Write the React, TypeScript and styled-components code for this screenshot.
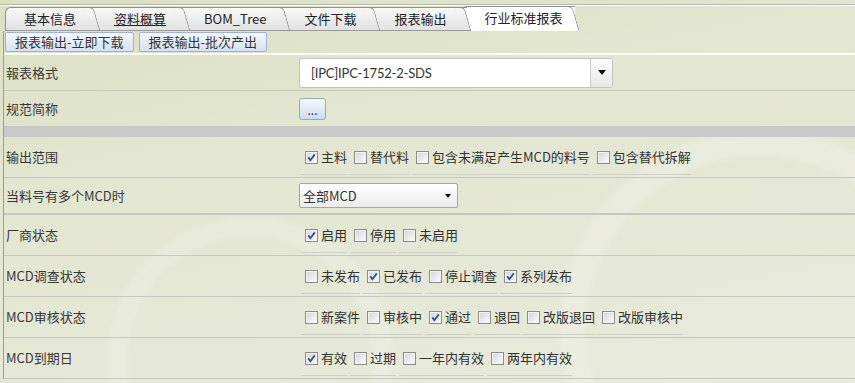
import React from "react";
import styled, { createGlobalStyle } from "styled-components";

const Global = createGlobalStyle`
  html, body { margin: 0; padding: 0; }
  body {
    width: 855px;
    height: 383px;
    overflow: hidden;
    font-family: "Noto Sans CJK SC", "Microsoft YaHei", sans-serif;
    font-size: 13px;
    color: #333;
    background:
      radial-gradient(circle at 760px 330px, transparent 170px, rgba(255,255,255,0.2) 178px, rgba(255,255,255,0.2) 196px, transparent 204px),
      radial-gradient(circle at 250px 360px, transparent 120px, rgba(255,255,255,0.16) 126px, rgba(255,255,255,0.16) 140px, transparent 146px),
      linear-gradient(168deg, #dbe0c3 0%, #e3e6d1 35%, #e8eadc 100%);
  }
`;

const Page = styled.div`
  width: 855px;
  height: 383px;
`;

const TopRule = styled.div`
  height: 4px;
  border-bottom: 1px solid #b6b8ae;
  box-shadow: 0 1px 0 rgba(255, 255, 255, 0.85);
`;

const TabBar = styled.div`
  display: flex;
  align-items: flex-end;
  height: 25px;
  padding: 1px 0 0 5px;
`;

const Tab = styled.div<{ $active?: boolean; $first?: boolean; $z: number; $link?: boolean }>`
  position: relative;
  z-index: ${(p) => p.$z};
  box-sizing: border-box;
  display: flex;
  align-items: center;
  height: ${(p) => (p.$active ? 25 : 24)}px;
  padding: 0 ${(p) => (p.$active ? 12 : 20)}px 1px ${(p) => (p.$first ? 18 : 24)}px;
  margin-left: ${(p) => (p.$first ? 0 : -6)}px;
  border-top: 1px solid #8f8f8f;
  border-left: ${(p) => (p.$first ? "1px solid #8f8f8f" : "none")};
  border-bottom: 1px solid ${(p) => (p.$active ? "#ffffff" : "#9a9a9a")};
  border-top-left-radius: 6px;
  background: ${(p) => (p.$active ? "#ffffff" : "linear-gradient(#f8f8f8, #e2e2e2)")};
  color: #222;
  font-size: 13px;
  line-height: 18px;
  white-space: nowrap;
  text-decoration: ${(p) => (p.$link ? "underline" : "none")};

  &::after {
    content: "";
    position: absolute;
    top: -1px;
    bottom: -1px;
    right: -1px;
    width: 10px;
    box-sizing: border-box;
    background: inherit;
    border-top: 1px solid #8f8f8f;
    border-right: 1px solid #8f8f8f;
    border-bottom: 1px solid ${(p) => (p.$active ? "#ffffff" : "#9a9a9a")};
    border-top-right-radius: 5px;
    transform: skewX(16deg);
  }
`;

const TabLabel = styled.span`
  position: relative;
  z-index: 1;
`;

const Panel = styled.div`
  margin-left: 3px;
  border-left: 1px solid #9c9c9c;
`;

const SubBar = styled.div`
  display: flex;
  gap: 5px;
  height: 21px;
  padding: 1px 0 0 1px;
  border-bottom: 2px solid rgba(255, 255, 255, 0.9);
`;

const SubButton = styled.div`
  box-sizing: border-box;
  height: 20px;
  padding: 0 9px;
  border: 1px solid #9db2d2;
  border-radius: 2px;
  background: linear-gradient(#f5f8fd, #d5e1f3);
  font-size: 13px;
  line-height: 18px;
  color: #333;
  white-space: nowrap;
`;

const Row = styled.div<{ $h: number; $border?: number }>`
  display: grid;
  grid-template-columns: 295px 1fr;
  align-items: center;
  height: ${(p) => p.$h}px;
  border-bottom: ${(p) => p.$border ?? 1}px solid #c6c7c2;
`;

const Label = styled.div`
  padding-left: 2px;
  font-size: 13px;
  line-height: 18px;
  color: #383838;
  white-space: nowrap;
`;

const Band = styled.div`
  height: 11px;
  background: #c9c9c9;
`;

const FormatSelect = styled.div`
  box-sizing: border-box;
  display: flex;
  width: 314px;
  height: 30px;
  border: 1px solid #c3c3c3;
  border-radius: 3px;
  background: #fff;
  overflow: hidden;
`;

const SelectText = styled.div<{ $pad: number; $latin?: boolean }>`
  flex: 1;
  display: flex;
  align-items: center;
  padding-left: ${(p) => p.$pad}px;
  font-family: ${(p) => (p.$latin ? `"Lato", "Noto Sans CJK SC", sans-serif` : "inherit")};
  letter-spacing: ${(p) => (p.$latin ? "-0.2px" : "normal")};
  font-size: 13px;
  color: #333;
  white-space: nowrap;
`;

const ArrowBox = styled.div`
  display: flex;
  align-items: center;
  justify-content: center;
  width: 21px;
  border-left: 1px solid #cacaca;
  background: linear-gradient(#fdfdfd, #e8e8e8);
`;

const Triangle = styled.span<{ $w: number; $h: number }>`
  width: 0;
  height: 0;
  border-left: ${(p) => p.$w}px solid transparent;
  border-right: ${(p) => p.$w}px solid transparent;
  border-top: ${(p) => p.$h}px solid #111;
`;

const DotsButton = styled.div`
  box-sizing: border-box;
  display: flex;
  align-items: flex-end;
  justify-content: center;
  width: 27px;
  height: 22px;
  padding-bottom: 3px;
  border: 1px solid #94a9c9;
  border-radius: 3px;
  background: linear-gradient(#f6f9fd, #cddaee);
  font-size: 12px;
  line-height: 12px;
  color: #333;
`;

const SmallSelect = styled.div`
  box-sizing: border-box;
  display: flex;
  align-items: center;
  width: 159px;
  height: 25px;
  padding-right: 6px;
  border: 1px solid #a6a6a6;
  border-radius: 2px;
  background: linear-gradient(#ffffff, #ebebeb);
`;

const CheckGroup = styled.div`
  align-self: stretch;
  display: flex;
  align-items: flex-start;
  gap: 3px;
  margin-left: 2px;
  padding-top: 10px;
`;

const CheckItem = styled.label`
  display: flex;
  align-items: center;
  gap: 3px;
  height: 20px;
  padding: 0 0 7px 4px;
  border-bottom: 1px solid #cfd0cb;
  font-size: 13px;
  line-height: 18px;
  color: #333;
  white-space: nowrap;
`;

const Box = styled.span`
  box-sizing: border-box;
  display: inline-flex;
  align-items: center;
  justify-content: center;
  width: 13px;
  height: 13px;
  border: 1px solid #8c8c8c;
  background: linear-gradient(135deg, #d4d4d4 0%, #f7f7f7 85%);
  box-shadow: inset 0 0 0 1px #f3f3f3;
`;

const CheckBox = ({ checked }: { checked?: boolean }) => (
  <Box>
    {checked && (
      <svg width="11" height="11" viewBox="0 0 11 11">
        <path d="M2.3 5.4 L4.4 8.2 L8.8 2.4" fill="none" stroke="#33508f" strokeWidth="1.8" />
      </svg>
    )}
  </Box>
);

type Opt = [string, boolean];

const Checks = ({ items }: { items: Opt[] }) => (
  <CheckGroup>
    {items.map(([t, c]) => (
      <CheckItem key={t}>
        <CheckBox checked={c} />
        {t}
      </CheckItem>
    ))}
  </CheckGroup>
);

const tabs = ["基本信息", "资料概算", "BOM_Tree", "文件下载", "报表输出", "行业标准报表"];

const checkRows: { label: string; items: Opt[] }[] = [
  { label: "厂商状态", items: [["启用", true], ["停用", false], ["未启用", false]] },
  {
    label: "MCD调查状态",
    items: [["未发布", false], ["已发布", true], ["停止调查", false], ["系列发布", true]],
  },
  {
    label: "MCD审核状态",
    items: [
      ["新案件", false],
      ["审核中", false],
      ["通过", true],
      ["退回", false],
      ["改版退回", false],
      ["改版审核中", false],
    ],
  },
  {
    label: "MCD到期日",
    items: [["有效", true], ["过期", false], ["一年内有效", false], ["两年内有效", false]],
  },
];

export default function App() {
  return (
    <Page>
      <Global />
      <TopRule />
      <TabBar>
        {tabs.map((t, i) => (
          <Tab
            key={t}
            $first={i === 0}
            $active={i === tabs.length - 1}
            $link={i === 1}
            $z={20 - i}
          >
            <TabLabel>{t}</TabLabel>
          </Tab>
        ))}
      </TabBar>
      <Panel>
        <SubBar>
          <SubButton>报表输出-立即下载</SubButton>
          <SubButton>报表输出-批次产出</SubButton>
        </SubBar>
        <Row $h={35}>
          <Label>報表格式</Label>
          <FormatSelect>
            <SelectText $pad={11} $latin>
              [IPC]IPC-1752-2-SDS
            </SelectText>
            <ArrowBox>
              <Triangle $w={4} $h={5} />
            </ArrowBox>
          </FormatSelect>
        </Row>
        <Row $h={35} $border={0}>
          <Label>规范简称</Label>
          <DotsButton>...</DotsButton>
        </Row>
        <Band />
        <Row $h={40}>
          <Label>输出范围</Label>
          <Checks
            items={[
              ["主料", true],
              ["替代料", false],
              ["包含未满足产生MCD的料号", false],
              ["包含替代拆解", false],
            ]}
          />
        </Row>
        <Row $h={35} $border={2}>
          <Label>当料号有多个MCD时</Label>
          <SmallSelect>
            <SelectText $pad={3}>全部MCD</SelectText>
            <Triangle $w={3.5} $h={4} />
          </SmallSelect>
        </Row>
        {checkRows.map((r) => (
          <Row key={r.label} $h={40}>
            <Label>{r.label}</Label>
            <Checks items={r.items} />
          </Row>
        ))}
      </Panel>
    </Page>
  );
}
